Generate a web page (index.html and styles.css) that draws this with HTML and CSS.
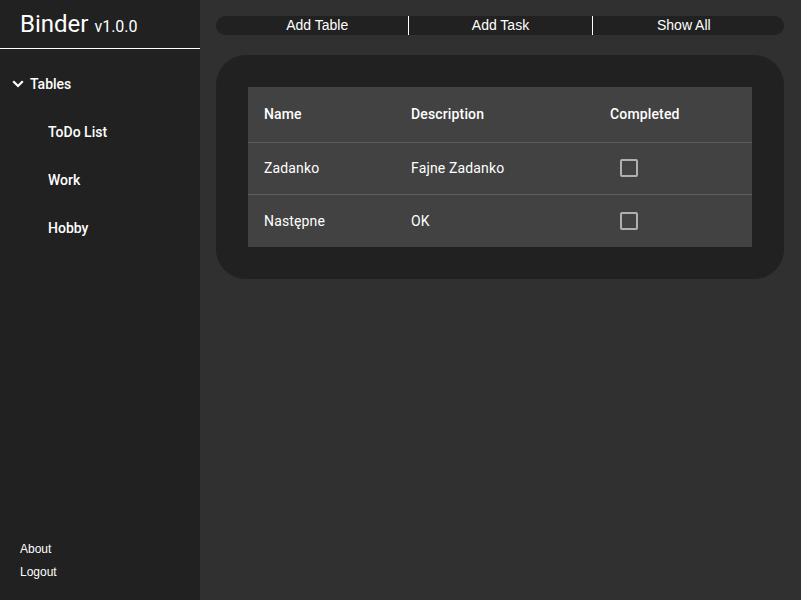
FILE: index.html
```html
<!DOCTYPE html>
<html>
<head>
<meta charset="utf-8">
<link rel="stylesheet" href="styles.css">
</head>
<body>
<div class="app">
  <aside class="sidebar">
    <div class="brand"><span class="brand-name">Binder</span> <span class="brand-ver">v1.0.0</span></div>
    <nav class="menu">
      <div class="menu-head">
        <svg class="chev" width="12" height="12" viewBox="0 0 12 12"><path d="M1.2 3.2 L6 8 L10.8 3.2" fill="none" stroke="#fff" stroke-width="2.2"/></svg>
        <span>Tables</span>
      </div>
      <div class="menu-item">ToDo List</div>
      <div class="menu-item">Work</div>
      <div class="menu-item">Hobby</div>
    </nav>
    <div class="bottom-links">
      <div class="blink">About</div>
      <div class="blink">Logout</div>
    </div>
  </aside>
  <main class="main">
    <div class="toolbar">
      <div class="tbtn">Add Table</div>
      <div class="tbtn">Add Task</div>
      <div class="tbtn">Show All</div>
    </div>
    <section class="card">
      <table class="tasks">
        <colgroup><col class="c1"><col class="c2"><col class="c3"></colgroup>
        <thead>
          <tr><th>Name</th><th>Description</th><th>Completed</th></tr>
        </thead>
        <tbody>
          <tr><td>Zadanko</td><td>Fajne Zadanko</td><td><span class="cb"></span></td></tr>
          <tr class="last"><td>Następne</td><td>OK</td><td><span class="cb"></span></td></tr>
        </tbody>
      </table>
    </section>
  </main>
</div>
</body>
</html>
```

FILE: styles.css
```css
* { box-sizing: border-box; }
html, body { margin: 0; height: 100%; }
body {
  background: #303030;
  color: #fff;
  font-family: Roboto, "Liberation Sans", sans-serif;
}
.app { display: flex; height: 600px; }
.sidebar {
  width: 200px;
  background: #212121;
  display: flex;
  flex-direction: column;
}
.brand {
  height: 49px;
  border-bottom: 1px solid #fff;
  padding: 9px 0 0 20px;
  line-height: 30px;
}
.brand-name { font-size: 24px; }
.brand-ver { font-size: 16px; margin-left: 2px; }
.menu { padding-top: 11px; }
.menu-head {
  display: flex;
  align-items: center;
  height: 48px;
  padding-left: 12px;
  font-size: 14px;
  font-weight: 500;
}
.chev { margin-right: 6px; }
.menu-item {
  height: 48px;
  line-height: 48px;
  padding-left: 48px;
  font-size: 14px;
  font-weight: 500;
}
.bottom-links {
  margin-top: auto;
  padding: 0 0 16px 20px;
  font-family: "Liberation Sans", Arial, sans-serif;
  font-size: 12px;
}
.blink { height: 23px; line-height: 23px; }
.main {
  flex: 1;
  padding: 16px 17px 0 16px;
}
.toolbar {
  display: flex;
  height: 19px;
  padding: 0 9px 0 10px;
  background: #212121;
  border-radius: 10px;
  font-family: "Liberation Sans", Arial, sans-serif;
  font-size: 14px;
}
.tbtn {
  flex: 1;
  text-align: center;
  line-height: 19px;
}
.tbtn + .tbtn { border-left: 1px solid #fff; }
.card {
  margin-top: 20px;
  background: #212121;
  border-radius: 30px;
  padding: 32px;
}
.tasks {
  width: 504px;
  border-collapse: collapse;
  background: #424242;
  table-layout: fixed;
  font-size: 14px;
  letter-spacing: 0.15px;
}
.c1 { width: 147px; }
.c2 { width: 199px; }
.c3 { width: 158px; }
.tasks th {
  height: 55px;
  text-align: left;
  padding: 0 0 0 16px;
  font-weight: 500;
  border-bottom: 1px solid #5e5e5e;
}
.tasks td {
  height: 52px;
  padding: 0 0 0 16px;
  font-weight: 400;
}
.tasks tr.last td { height: 53px; border-top: 1px solid #5e5e5e; }
.cb {
  display: block;
  width: 18px;
  height: 18px;
  margin-left: 10px;
  border: 2px solid #b0b0b0;
  border-radius: 2px;
}
```
